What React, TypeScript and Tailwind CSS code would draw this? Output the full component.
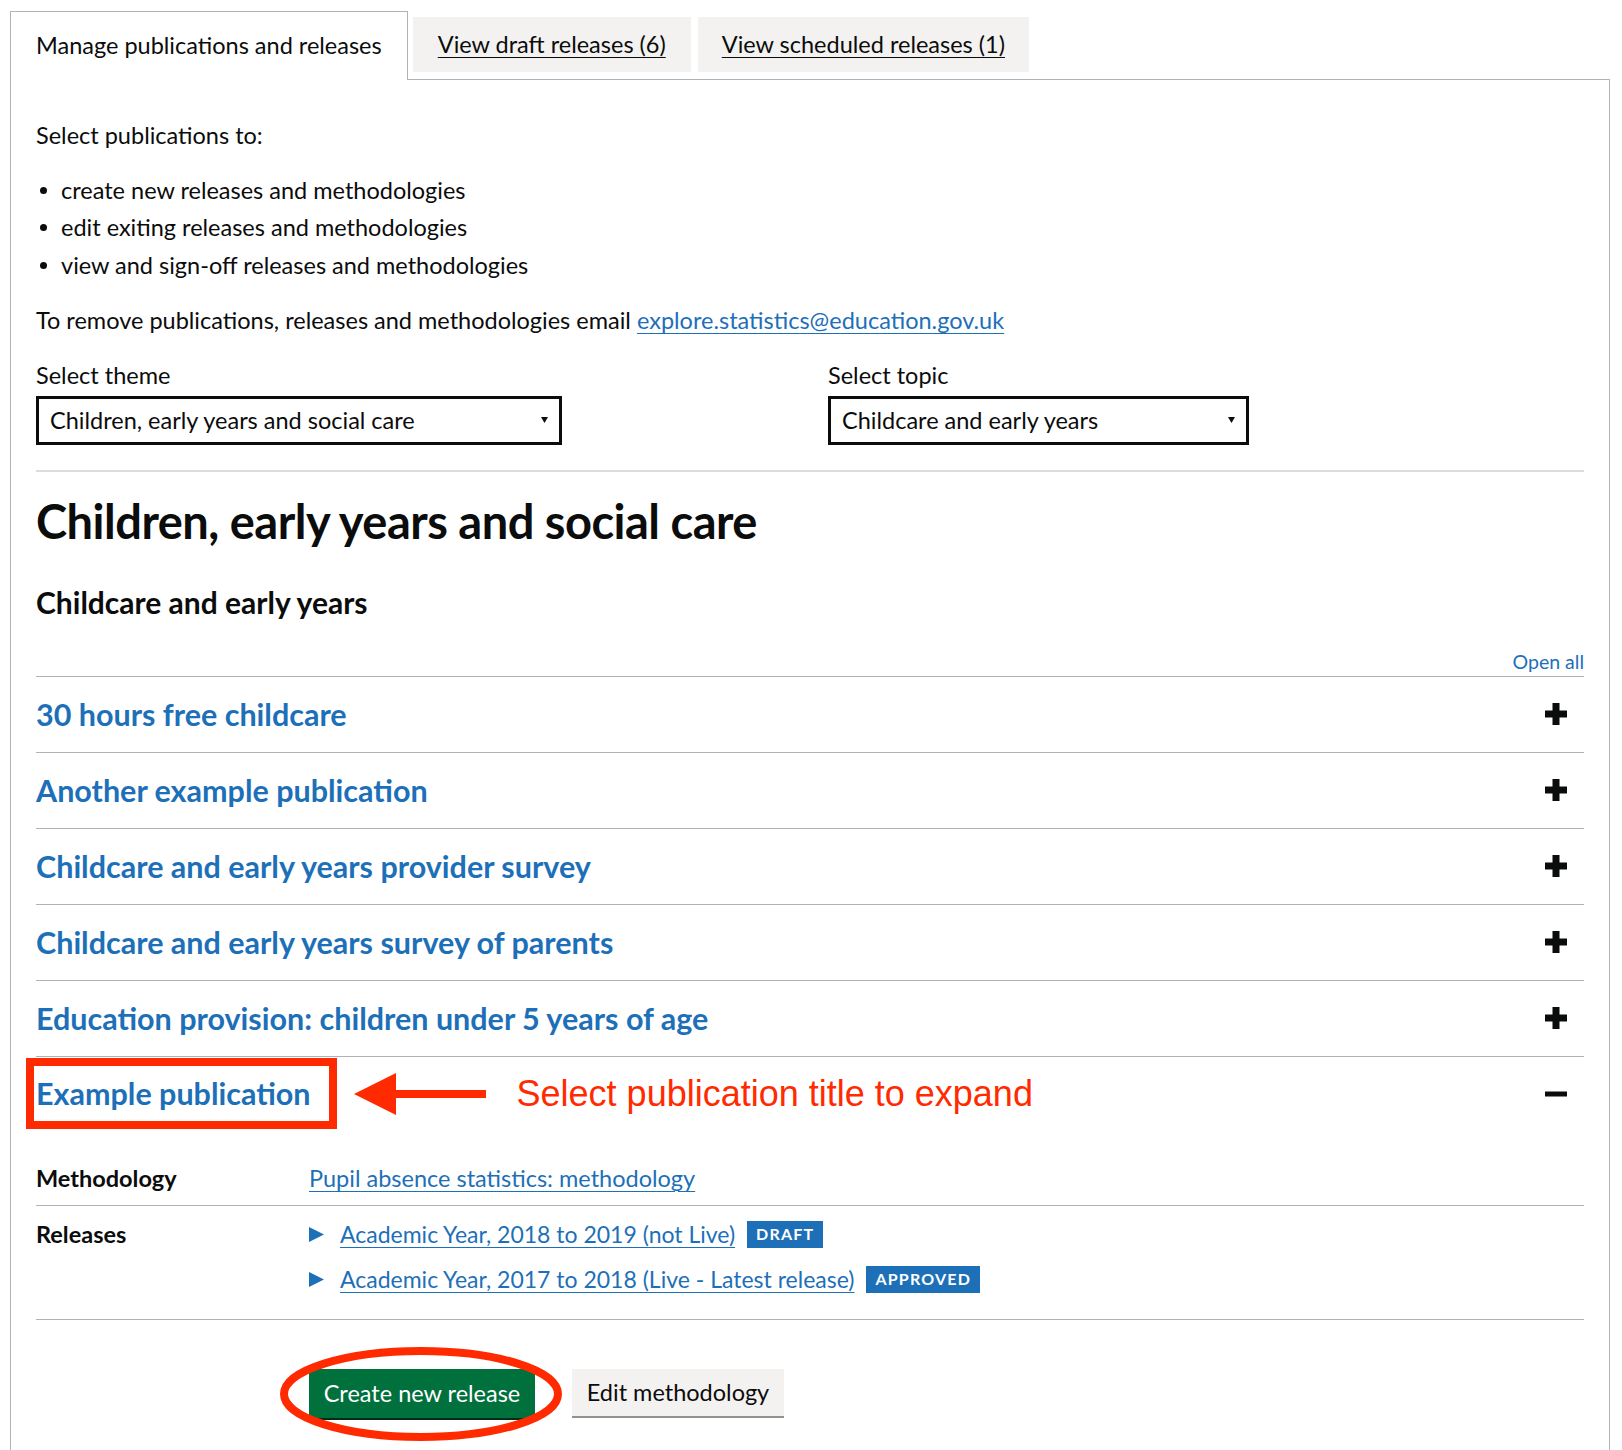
import { ReactNode } from "react";

const publications = [
  "30 hours free childcare",
  "Another example publication",
  "Childcare and early years provider survey",
  "Childcare and early years survey of parents",
  "Education provision: children under 5 years of age",
];

const Plus = () => (
  <svg width="22" height="22" viewBox="0 0 22 22" className="shrink-0">
    <rect x="0" y="7.5" width="22" height="7" fill="#0b0c0c" />
    <rect x="7.5" y="0" width="7" height="22" fill="#0b0c0c" />
  </svg>
);

const Minus = () => (
  <svg width="22" height="22" viewBox="0 0 22 22" className="shrink-0">
    <rect x="0" y="8.5" width="22" height="5" fill="#0b0c0c" />
  </svg>
);

const FakeSelect = ({ value, width }: { value: string; width: string }) => (
  <div className={`${width} h-[49px] border-[3px] border-[#0b0c0c] flex items-center justify-between pl-[11px] pr-[11px]`}>
    <span className="text-[23.5px] leading-none">{value}</span>
    <svg width="7" height="6" viewBox="0 0 7 6">
      <path d="M0 0 L7 0 L3.5 6 Z" fill="#0b0c0c" />
    </svg>
  </div>
);

const Link = ({ children }: { children: ReactNode }) => (
  <a className="text-[#1d70b8] underline underline-offset-[4px] decoration-1 cursor-pointer">{children}</a>
);

const Tag = ({ children }: { children: ReactNode }) => (
  <span className="inline-flex items-center h-[27px] px-[9px] bg-[#1d70b8] text-white text-[16px] font-bold tracking-[1.2px] uppercase">
    {children}
  </span>
);

const ReleaseItem = ({ label, tag }: { label: string; tag: string }) => (
  <div className="flex items-center h-[45px]">
    <svg width="15" height="15" viewBox="0 0 15 15" className="shrink-0">
      <path d="M0 0 L15 7.5 L0 15 Z" fill="#1d70b8" />
    </svg>
    <span className="ml-[16px] text-[23px]">
      <Link>{label}</Link>
    </span>
    <span className="ml-[12px]">
      <Tag>{tag}</Tag>
    </span>
  </div>
);

export default function App() {
  return (
    <div className="min-h-[1450px] bg-white text-[#0b0c0c] font-['Lato',sans-serif] pl-[10px] pr-[12px] pt-[11px] overflow-hidden">
      {/* tabs */}
      <div className="flex items-start h-[68px]">
        <div className="relative z-10 h-[69px] -mb-px bg-white border border-b-0 border-[#b1b4b6] px-[25px] flex items-center text-[23.5px]">
          Manage publications and releases
        </div>
        <div className="mt-[6px] ml-[5px] h-[55px] bg-[#f3f2f1] px-[25px] flex items-center text-[23.5px]">
          <a className="underline underline-offset-[4px] decoration-1 cursor-pointer">View draft releases (6)</a>
        </div>
        <div className="mt-[6px] ml-[7px] h-[55px] bg-[#f3f2f1] px-[24px] flex items-center text-[23.5px]">
          <a className="underline underline-offset-[4px] decoration-1 cursor-pointer">View scheduled releases (1)</a>
        </div>
      </div>

      {/* panel */}
      <div className="border border-[#b1b4b6] min-h-[1400px] pl-[25px] pr-[25px] pt-[40px]">
        <p className="text-[23.5px] leading-[30px]">Select publications to:</p>
        <ul className="mt-[22px] text-[23.5px]">
          {[
            "create new releases and methodologies",
            "edit exiting releases and methodologies",
            "view and sign-off releases and methodologies",
          ].map((t) => (
            <li key={t} className="flex items-center leading-[37.3px]">
              <span className="w-[7px] h-[7px] rounded-full bg-[#0b0c0c] ml-[4px] mr-[14px]" />
              {t}
            </li>
          ))}
        </ul>
        <p className="mt-[21px] text-[23.5px] leading-[30px]">
          To remove publications, releases and methodologies email <Link>explore.statistics@education.gov.uk</Link>
        </p>

        <div className="mt-[25px] grid grid-cols-[792px_1fr]">
          <div>
            <div className="text-[23.5px] leading-[30px]">Select theme</div>
            <div className="mt-[6px]">
              <FakeSelect value="Children, early years and social care" width="w-[526px]" />
            </div>
          </div>
          <div>
            <div className="text-[23.5px] leading-[30px]">Select topic</div>
            <div className="mt-[6px]">
              <FakeSelect value="Childcare and early years" width="w-[421px]" />
            </div>
          </div>
        </div>

        <hr className="mt-[25px] border-0 h-[2px] bg-[#dcdcdc]" />

        <h1 className="mt-[24px] text-[47px] leading-[50px] font-bold tracking-[-0.5px]">Children, early years and social care</h1>
        <h2 className="mt-[41px] text-[30px] leading-[30px] font-bold">Childcare and early years</h2>

        <div className="mt-[33px] flex justify-end">
          <a className="text-[19.5px] leading-[24px] text-[#1d70b8] cursor-pointer">Open all</a>
        </div>

        {/* accordion */}
        <div className="mt-[2px]">
          {publications.map((p) => (
            <div key={p} className="border-t border-[#b1b4b6] h-[76px] flex items-center justify-between pr-[17px]">
              <span className="text-[30.5px] font-bold text-[#1d70b8]">{p}</span>
              <Plus />
            </div>
          ))}

          <div className="border-t border-[#b1b4b6]">
            <div className="flex items-center h-[74px] pr-[17px]">
              <div className="-ml-[10px] h-[71px] border-[8px] border-[#ff2a00] pl-[2px] pr-[18px] flex items-center">
                <span className="text-[30.5px] font-bold text-[#1d70b8]">Example publication</span>
              </div>
              <svg width="132" height="42" viewBox="0 0 132 42" className="ml-[17px] shrink-0">
                <path d="M0 21 L42 0 L42 17 L132 17 L132 25 L42 25 L42 42 Z" fill="#ff2a00" />
              </svg>
              <span className="ml-[31px] font-['Liberation_Sans',Arial,sans-serif] text-[36px] text-[#ff2a00]">
                Select publication title to expand
              </span>
              <div className="ml-auto">
                <Minus />
              </div>
            </div>

            <div className="mt-[25px] flex items-center h-[45px] text-[23.5px]">
              <span className="w-[273px] font-bold">Methodology</span>
              <Link>Pupil absence statistics: methodology</Link>
            </div>
            <div className="mt-[4px] border-t border-[#b1b4b6]" />
            <div className="flex pt-[6px] pb-[17px]">
              <span className="w-[273px] font-bold text-[23.5px] leading-[45px]">Releases</span>
              <div>
                <ReleaseItem label="Academic Year, 2018 to 2019 (not Live)" tag="Draft" />
                <ReleaseItem label="Academic Year, 2017 to 2018 (Live - Latest release)" tag="Approved" />
              </div>
            </div>
            <div className="border-t border-[#b1b4b6]" />

            <div className="relative mt-[49px] flex items-start pl-[273px]">
              <button className="h-[49px] w-[226px] bg-[#00703c] text-white text-[23.5px] shadow-[0_2px_0_#002d18]">
                Create new release
              </button>
              <button className="ml-[37px] h-[47px] w-[212px] bg-[#f3f2f1] text-[#0b0c0c] text-[23.5px] shadow-[0_2px_0_#929191]">
                Edit methodology
              </button>
              <svg width="284" height="96" viewBox="0 0 284 96" className="absolute left-[243px] -top-[23px] pointer-events-none">
                <ellipse cx="142" cy="48" rx="137" ry="43" fill="none" stroke="#ff2a00" strokeWidth="8" />
              </svg>
            </div>
          </div>
        </div>
      </div>
    </div>
  );
}
